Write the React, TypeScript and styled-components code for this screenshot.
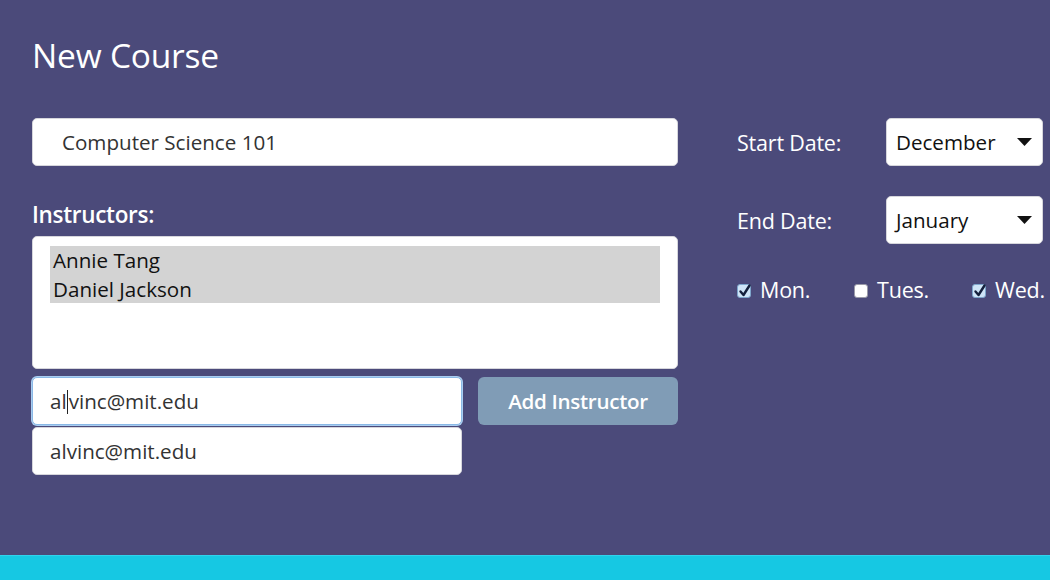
import React from "react";
import styled, { createGlobalStyle } from "styled-components";

const Global = createGlobalStyle`
  html, body { margin: 0; padding: 0; }
  body { background: #4b4a7a; font-family: "Open Sans", "Noto Sans", sans-serif; }
`;

const Page = styled.div`
  width: 1050px;
  height: 580px;
  display: flex;
  flex-direction: column;
  overflow: hidden;
`;

const Main = styled.main`
  height: 555px;
  background: #4b4a7a;
  padding: 35px 0 0 32px;
  box-sizing: border-box;
`;

const Footer = styled.footer`
  flex: 1;
  background: #16c8e3;
  border-top: 1px solid #2fd3ec;
`;

const Title = styled.h1`
  margin: 0;
  font-size: 33.5px;
  line-height: 40px;
  font-weight: 400;
  color: #ffffff;
  letter-spacing: -0.2px;
`;

const Columns = styled.div`
  display: flex;
  gap: 59px;
  margin-top: 43px;
`;

const LeftCol = styled.div`
  width: 646px;
  display: flex;
  flex-direction: column;
`;

const RightCol = styled.div`
  width: 306px;
  display: flex;
  flex-direction: column;
`;

const Field = styled.div<{ $width?: number; $focus?: boolean; $pad?: number }>`
  width: ${(p) => (p.$width ? `${p.$width}px` : "100%")};
  height: 48px;
  box-sizing: border-box;
  background: #fff;
  border: 1px solid ${(p) => (p.$focus ? "#8ab8e6" : "#d6d6dc")};
  box-shadow: ${(p) => (p.$focus ? "0 0 0 1px #a9cdf0" : "none")};
  border-radius: 5px;
  display: flex;
  align-items: center;
  padding-left: ${(p) => p.$pad ?? 17}px;
  padding-bottom: 1px;
  font-size: 20.6px;
  color: #333;
`;

const Label = styled.div`
  margin-top: 36px;
  font-size: 22.5px;
  line-height: 26px;
  font-weight: 600;
  color: #fff;
  letter-spacing: -0.3px;
`;

const ListBox = styled.div`
  margin-top: 8px;
  height: 133px;
  box-sizing: border-box;
  background: #fff;
  border: 1px solid #d6d6dc;
  border-radius: 5px;
  padding: 9px 17px 0 17px;
`;

const Selected = styled.div`
  background: #d3d3d3;
  padding: 0 3px;
  height: 57px;
  display: flex;
  flex-direction: column;
  justify-content: center;
`;

const Option = styled.div`
  font-size: 20.6px;
  line-height: 28.5px;
  color: #111;
`;

const Row = styled.div`
  display: flex;
  gap: 16px;
  margin-top: 8px;
  align-items: flex-start;
`;

const Stack = styled.div`
  display: flex;
  flex-direction: column;
  gap: 2px;
`;

const Caret = styled.span`
  display: inline-block;
  width: 1px;
  height: 24px;
  background: #222;
  vertical-align: -5px;
  margin: 0 0.5px;
`;

const Button = styled.button`
  width: 200px;
  height: 48px;
  border: none;
  border-radius: 6px;
  background: #809cb6;
  color: #fff;
  font-family: inherit;
  font-size: 20.6px;
  font-weight: 600;
  letter-spacing: -0.3px;
  cursor: pointer;
`;

const DateRow = styled.div<{ $first?: boolean }>`
  display: flex;
  align-items: center;
  justify-content: space-between;
  margin-top: ${(p) => (p.$first ? 0 : 30)}px;
`;

const DateLabel = styled.span`
  font-size: 21.5px;
  color: #fff;
  letter-spacing: -0.2px;
`;

const Select = styled.div`
  width: 157px;
  height: 48px;
  box-sizing: border-box;
  background: #fff;
  border-radius: 5px;
  border: 1px solid #d6d6dc;
  display: flex;
  align-items: center;
  justify-content: space-between;
  padding: 0 10px 1px 9px;
  font-size: 20.6px;
  color: #111;
`;

const Days = styled.div`
  display: flex;
  margin-top: 31px;
  align-items: center;
`;

const Day = styled.label<{ $width: number }>`
  flex: 0 0 ${(p) => p.$width}px;
  display: flex;
  align-items: center;
  gap: 9px;
  font-size: 21.5px;
  color: #fff;
  letter-spacing: -0.2px;
  white-space: nowrap;
`;

const Box = styled.span<{ $checked?: boolean }>`
  width: 14px;
  height: 14px;
  flex-shrink: 0;
  box-sizing: border-box;
  border-radius: 3px;
  background: ${(p) => (p.$checked ? "#cfe5f8" : "#fff")};
  border: 1px solid ${(p) => (p.$checked ? "#7ea6cc" : "#9a9aa8")};
  display: inline-flex;
  align-items: center;
  justify-content: center;
  margin-top: 3px;
`;

const Arrow = () => (
  <svg width="15" height="8" viewBox="0 0 15 8">
    <path d="M0 0 L15 0 L7.5 8 Z" fill="#111" />
  </svg>
);

const Check = () => (
  <svg width="13" height="13" viewBox="0 0 13 13" style={{ overflow: "visible" }}>
    <path d="M2.5 6.5 L5.5 10 L11.5 0.5" stroke="#14203c" strokeWidth="2.4" fill="none" strokeLinecap="round" strokeLinejoin="round" />
  </svg>
);

export default function App() {
  return (
    <Page>
      <Global />
      <Main>
        <Title>New Course</Title>
        <Columns>
          <LeftCol>
            <Field $pad={29}>Computer Science 101</Field>
            <Label>Instructors:</Label>
            <ListBox>
              <Selected>
                <Option>Annie Tang</Option>
                <Option>Daniel Jackson</Option>
              </Selected>
            </ListBox>
            <Row>
              <Stack>
                <Field $width={430} $focus>
                  <span>
                    al<Caret />vinc@mit.edu
                  </span>
                </Field>
                <Field $width={430}>alvinc@mit.edu</Field>
              </Stack>
              <Button>Add Instructor</Button>
            </Row>
          </LeftCol>
          <RightCol>
            <DateRow $first>
              <DateLabel>Start Date:</DateLabel>
              <Select>
                <span>December</span>
                <Arrow />
              </Select>
            </DateRow>
            <DateRow>
              <DateLabel>End Date:</DateLabel>
              <Select>
                <span>January</span>
                <Arrow />
              </Select>
            </DateRow>
            <Days>
              <Day $width={117}>
                <Box $checked><Check /></Box>Mon.
              </Day>
              <Day $width={118}>
                <Box />Tues.
              </Day>
              <Day $width={78}>
                <Box $checked><Check /></Box>Wed.
              </Day>
            </Days>
          </RightCol>
        </Columns>
      </Main>
      <Footer />
    </Page>
  );
}
